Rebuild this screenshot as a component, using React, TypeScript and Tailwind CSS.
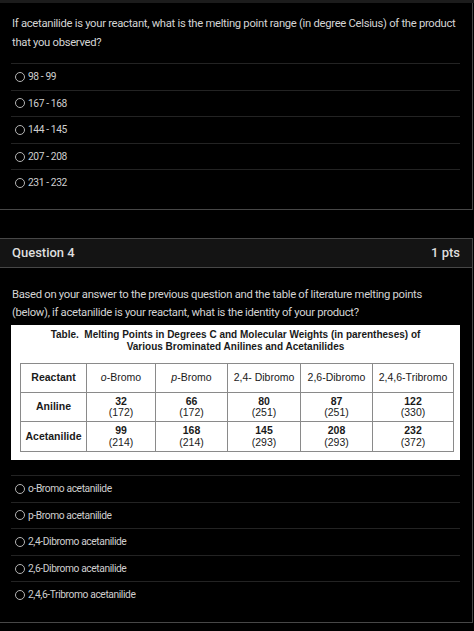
import React from 'react';

const firstOptions = ['98 - 99', '167 - 168', '144 - 145', '207 - 208', '231 - 232'];
const secondOptions = [
  'o-Bromo acetanilide',
  'p-Bromo acetanilide',
  '2,4-Dibromo acetanilide',
  '2,6-Dibromo acetanilide',
  '2,4,6-Tribromo acetanilide',
];

const OptionList = ({ items }: { items: string[] }) => (
  <div className="mx-[11px] w-[449px]">
    {items.map((item) => (
      <div key={item} className="h-[26.6px] border-t border-[#232323] flex items-center pl-[4px]">
        <span className="w-[10px] h-[10px] rounded-full border border-[#b5b5b5] mr-[3px] shrink-0" />
        <span className="text-[10.25px] tracking-[-0.4px] text-[#cfcfcf]">{item}</span>
      </div>
    ))}
  </div>
);

const columns = [
  { label: <>Reactant</>, bold: true, w: 'w-[66px]' },
  { label: <><i>o</i>-Bromo</>, w: 'w-[69px]' },
  { label: <><i>p</i>-Bromo</>, w: 'w-[72px]' },
  { label: <>2,4- Dibromo</>, w: 'w-[73px]' },
  { label: <>2,6-Dibromo</>, w: 'w-[72px]' },
  { label: <>2,4,6-Tribromo</>, w: 'w-[81px]' },
];

const rows = [
  { name: 'Aniline', values: [['32', '172'], ['66', '172'], ['80', '251'], ['87', '251'], ['122', '330']] },
  { name: 'Acetanilide', values: [['99', '214'], ['168', '214'], ['145', '293'], ['208', '293'], ['232', '372']] },
];

const MeltingTable = () => (
  <div className="mx-[11px] w-[449px] bg-white pt-[4px] pb-[8px] text-[#1a1a1a]" style={{ fontFamily: '"Liberation Sans", Arial, sans-serif' }}>
    <div className="text-center font-bold text-[10px] leading-[12px]">
      <div>Table.&nbsp; Melting Points in Degrees C and Molecular Weights (in parentheses) of</div>
      <div>Various Brominated Anilines and Acetanilides</div>
    </div>
    <table className="ml-[9px] mt-[10px] border-collapse text-[10.5px] leading-[11.5px]">
      <tbody>
        <tr className="h-[29px]">
          {columns.map((c, i) => (
            <td key={i} className={`${c.w} border border-[#8a8a8a] text-center ${c.bold ? 'font-bold' : ''}`}>
              {c.label}
            </td>
          ))}
        </tr>
        {rows.map((r) => (
          <tr key={r.name} className="h-[29.5px]">
            <td className="border border-[#8a8a8a] text-center font-bold">{r.name}</td>
            {r.values.map(([v, mw]) => (
              <td key={v + mw} className="border border-[#8a8a8a] text-center">
                <div className="font-bold">{v}</div>
                <div>({mw})</div>
              </td>
            ))}
          </tr>
        ))}
      </tbody>
    </table>
  </div>
);

export default function App() {
  return (
    <div className="w-[474px] h-[631px] bg-black overflow-hidden" style={{ fontFamily: 'Roboto, "Noto Sans", sans-serif' }}>
      <div className="h-[3px] bg-[#1c1c1c]" />

      <div className="w-[473px] border-r border-b border-[#474747] bg-black pb-[13px]">
        <p className="px-[12px] pt-[11px] text-[11.25px] tracking-[-0.29px] leading-[19px] text-[#d4d4d4]">
          If acetanilide is your reactant, what is the melting point range (in degree Celsius) of the product
          that you observed?
        </p>
        <div className="mt-[11px]">
          <OptionList items={firstOptions} />
        </div>
      </div>

      <div className="h-[28px]" />

      <div className="w-[473px] border-t border-r border-b border-[#474747] bg-black pb-[14px]">
        <div className="h-[29px] bg-[#141414] border-b border-[#474747] flex items-center justify-between px-[12px]">
          <span className="text-[13px] font-medium text-[#dedede]">Question 4</span>
          <span className="text-[13px] font-medium text-[#dedede]">1 pts</span>
        </div>
        <p className="px-[12px] pt-[18px] text-[11.25px] tracking-[-0.29px] leading-[18.5px] text-[#d4d4d4]">
          Based on your answer to the previous question and the table of literature melting points
          (below), if acetanilide is your reactant, what is the identity of your product?
        </p>
        <div className="mt-[2px]">
          <MeltingTable />
        </div>
        <div className="mt-[15px]">
          <OptionList items={secondOptions} />
        </div>
      </div>
    </div>
  );
}
